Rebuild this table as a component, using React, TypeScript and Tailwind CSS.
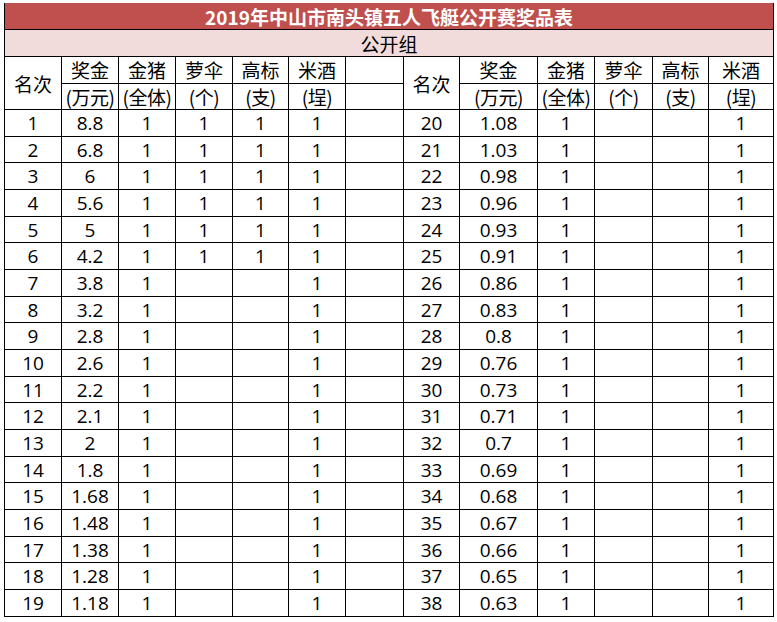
import React from "react";

const left: [string, string, string, string, string, string][] = [
  ["1", "8.8", "1", "1", "1", "1"],
  ["2", "6.8", "1", "1", "1", "1"],
  ["3", "6", "1", "1", "1", "1"],
  ["4", "5.6", "1", "1", "1", "1"],
  ["5", "5", "1", "1", "1", "1"],
  ["6", "4.2", "1", "1", "1", "1"],
  ["7", "3.8", "1", "", "", "1"],
  ["8", "3.2", "1", "", "", "1"],
  ["9", "2.8", "1", "", "", "1"],
  ["10", "2.6", "1", "", "", "1"],
  ["11", "2.2", "1", "", "", "1"],
  ["12", "2.1", "1", "", "", "1"],
  ["13", "2", "1", "", "", "1"],
  ["14", "1.8", "1", "", "", "1"],
  ["15", "1.68", "1", "", "", "1"],
  ["16", "1.48", "1", "", "", "1"],
  ["17", "1.38", "1", "", "", "1"],
  ["18", "1.28", "1", "", "", "1"],
  ["19", "1.18", "1", "", "", "1"],
];

const rightMoney = [
  "1.08", "1.03", "0.98", "0.96", "0.93", "0.91", "0.86", "0.83", "0.8", "0.76",
  "0.73", "0.71", "0.7", "0.69", "0.68", "0.67", "0.66", "0.65", "0.63",
];

const cell =
  "border-r border-b border-black flex items-center justify-center whitespace-nowrap overflow-visible leading-none";
const num = "font-['Open_Sans','Noto_Sans_CJK_SC',sans-serif] pt-[1px]";

export default function App() {
  const headers: [string, string][] = [
    ["奖金", "(万元)"],
    ["金猪", "(全体)"],
    ["萝伞", "(个)"],
    ["高标", "(支)"],
    ["米酒", "(埕)"],
  ];

  return (
    <div
      className="bg-white w-[777px] h-[622px] pt-[3px] pl-[4px] text-black text-[19px]"
      style={{ fontFamily: '"Noto Sans CJK SC", "Noto Sans", sans-serif' }}
    >
      <div className="grid w-[769px] border-l border-black grid-cols-[57px_57px_57px_57px_56px_57px_58px_56px_78px_57px_58px_56px_65px] grid-rows-[27px_27px_26.5px_26.5px_repeat(19,26.68px)]">
        <div className={`${cell} col-span-13 bg-[#c0504d] text-white font-bold`}>
          2019年中山市南头镇五人飞艇公开赛奖品表
        </div>
        <div className={`${cell} col-span-13 bg-[#f2dcdb]`}>公开组</div>

        {/* header row 1 */}
        <div className={`${cell} row-span-2`}>名次</div>
        {headers.map(([a]) => (
          <div key={"l1" + a} className={cell}>
            {a}
          </div>
        ))}
        <div className={cell}></div>
        <div className={`${cell} row-span-2`}>名次</div>
        {headers.map(([a]) => (
          <div key={"r1" + a} className={cell}>
            {a}
          </div>
        ))}

        {/* header row 2 */}
        {headers.map(([, b]) => (
          <div key={"l2" + b} className={`${cell} tracking-[-0.5px]`}>
            {b}
          </div>
        ))}
        <div className={cell}></div>
        {headers.map(([, b]) => (
          <div key={"r2" + b} className={`${cell} tracking-[-0.5px]`}>
            {b}
          </div>
        ))}

        {left.map((r, i) => (
          <React.Fragment key={i}>
            {r.map((v, j) => (
              <div key={j} className={`${cell} ${num}`}>
                {v}
              </div>
            ))}
            <div className={cell}></div>
            <div className={`${cell} ${num}`}>{String(i + 20)}</div>
            <div className={`${cell} ${num}`}>{rightMoney[i]}</div>
            <div className={`${cell} ${num}`}>1</div>
            <div className={cell}></div>
            <div className={cell}></div>
            <div className={`${cell} ${num}`}>1</div>
          </React.Fragment>
        ))}
      </div>
    </div>
  );
}
